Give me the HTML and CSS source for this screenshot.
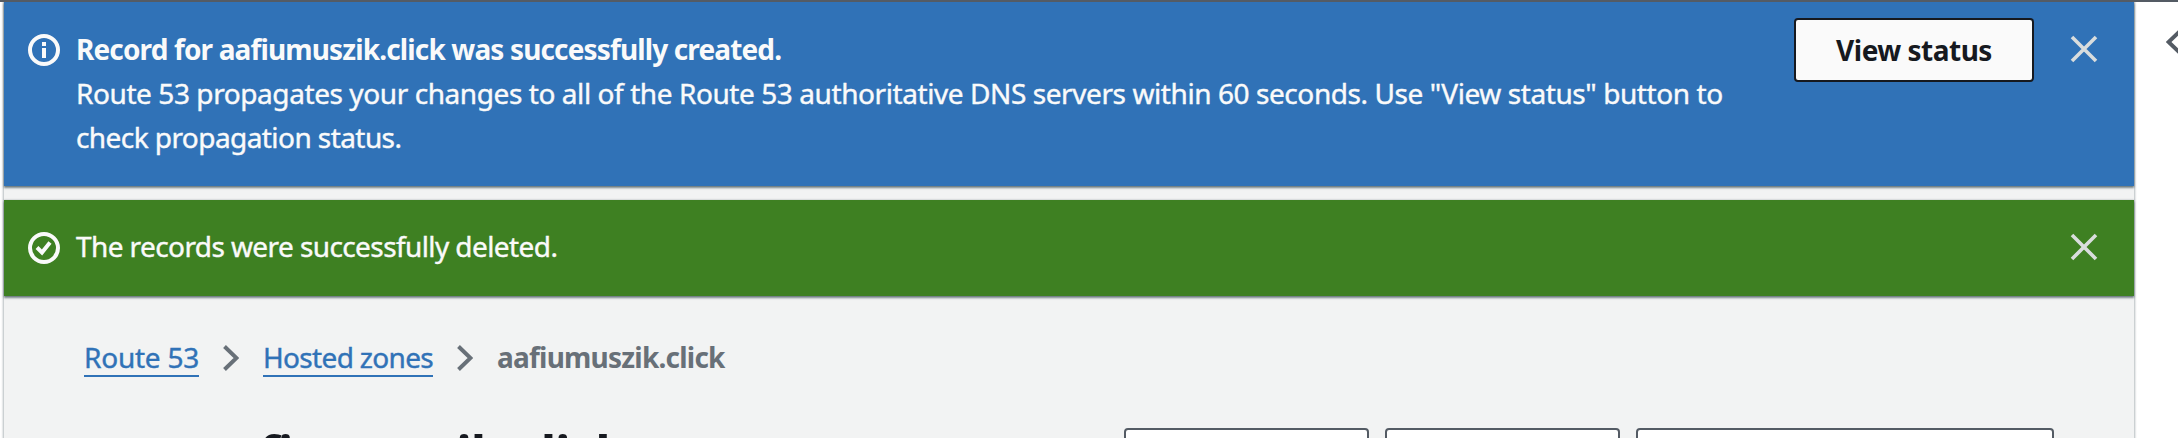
FILE: index.html
```html
<!DOCTYPE html>
<html lang="en">
<head>
<meta charset="utf-8">
<title>Route 53</title>
<link rel="stylesheet" href="styles.css">
</head>
<body>
<div class="app">
  <main class="content">
    <section class="flash flash-info">
      <svg class="flash-icon" viewBox="0 0 32 32"><circle cx="16" cy="16" r="14"/><path d="M16 14v10M16 8v4"/></svg>
      <div class="flash-text">
        <div class="flash-title">Record for aafiumuszik.click was successfully created.</div>
        <div class="flash-body">Route 53 propagates your changes to all of the Route 53 authoritative DNS servers within 60 seconds. Use "View status" button to<br><span class="flash-tail">check propagation status.</span></div>
      </div>
      <button class="status-button">View status</button>
      <svg class="close" viewBox="0 0 28 28"><path d="M2 2l24 24M26 2L2 26"/></svg>
    </section>
    <section class="flash flash-success">
      <svg class="flash-icon" viewBox="0 0 32 32"><circle cx="16" cy="16" r="14"/><path d="M9 15.500l5 5L22 10.500"/></svg>
      <div class="flash-text flash-deleted">The records were successfully deleted.</div>
      <svg class="close" viewBox="0 0 28 28"><path d="M2 2l24 24M26 2L2 26"/></svg>
    </section>
    <nav class="crumbs">
      <a class="crumb crumb-root">Route 53</a>
      <svg class="chevron" viewBox="0 0 16 26"><path d="M1.500 1.500L13.500 13l-12 11.500"/></svg>
      <a class="crumb crumb-zones">Hosted zones</a>
      <svg class="chevron" viewBox="0 0 16 26"><path d="M1.500 1.500L13.500 13l-12 11.500"/></svg>
      <span class="crumb-current">aafiumuszik.click</span>
    </nav>
    <header class="page-head">
      <h1 class="page-title">aafiumuszik.click</h1>
      <div class="actions">
        <div class="action action-a"></div>
        <div class="action action-b"></div>
        <div class="action action-c"></div>
      </div>
    </header>
  </main>
  <aside class="rail">
    <svg class="rail-chevron" viewBox="0 0 16 26"><path d="M14.500 1.500L2.500 13l12 11.500"/></svg>
  </aside>
</div>
</body>
</html>
```
FILE: styles.css
```css
* { box-sizing: border-box; }

body {
  margin: 0;
  height: 438px;
  overflow: hidden;
  background: #fff;
  font: 28px/44px "Noto Sans", "Open Sans", sans-serif;
}

.app {
  display: flex;
  height: 438px;
  padding-left: 4px;
  border-top: 2px solid #545b64;
  overflow: hidden;
}

.content {
  flex: none;
  width: 2130px;
  height: 500px;
  background: #f2f3f3;
  box-shadow: 0 0 2px 1px rgba(0, 28, 36, 0.3);
}

.flash {
  display: flex;
  align-items: flex-start;
  padding: 16px 36px 16px 24px;
  color: #fafafa;
  box-shadow: 0 2px 2px rgba(0, 28, 36, 0.5), 0 0 2px rgba(0, 28, 36, 0.3);
}

.flash-info { height: 184px; background: #3072b7; }
.flash-success { height: 96px; margin-top: 14px; background: #3e8022; }

.flash-icon {
  flex: none;
  width: 32px;
  height: 32px;
  margin-top: 16px;
  fill: none;
  stroke: #fafafa;
  stroke-width: 4;
}

.flash-text { flex: 1; margin: 9px 0 0 16px; white-space: nowrap; }
.flash-title { font-weight: 700; letter-spacing: -0.86px; }
.flash-body { letter-spacing: -0.42px; }
.flash-tail { letter-spacing: -0.57px; }
.flash-deleted { letter-spacing: -0.59px; }
.flash-body, .flash-deleted, .crumb { -webkit-text-stroke: 0.4px currentColor; }
.flash-success .flash-text { margin-top: 8px; }

.status-button {
  width: 240px;
  height: 64px;
  margin-right: 36px;
  padding: 0;
  border: 2px solid #16191f;
  border-radius: 4px;
  background: #fafafa;
  color: #16191f;
  font: 700 28px/40px "Noto Sans", "Open Sans", sans-serif;
  letter-spacing: -0.5px;
}

.close {
  flex: none;
  width: 28px;
  height: 28px;
  margin-top: 17px;
  fill: none;
  stroke: #d9dddd;
  stroke-width: 3.6;
}

.crumbs {
  display: flex;
  align-items: flex-start;
  height: 40px;
  margin: 42px 0 0 80px;
  line-height: 38px;
}

.crumb {
  height: 39px;
  border-bottom: 2px solid #3072b7;
  color: #3072b7;
  white-space: nowrap;
}

.crumb-root { width: 115px; letter-spacing: -0.24px; }
.crumb-zones { width: 170px; letter-spacing: -0.67px; }
.crumb-current { color: #687078; font-weight: 700; letter-spacing: -0.78px; }

.chevron {
  flex: none;
  width: 16px;
  height: 26px;
  margin: 7px 24px 0 24px;
  fill: none;
  stroke: #687078;
  stroke-width: 4;
}

.page-head {
  display: flex;
  align-items: flex-start;
  justify-content: space-between;
  margin-top: 50px;
  padding: 0 80px 0 195px;
}

.page-title {
  margin: 0;
  color: #16191f;
  font-size: 52px;
  font-weight: 700;
  line-height: 52px;
  letter-spacing: -1.2px;
}

.actions { display: flex; gap: 16px; }

.action {
  height: 64px;
  border: 2px solid #545b64;
  border-radius: 4px;
  background: #fff;
}

.action-a { width: 245px; }
.action-b { width: 235px; }
.action-c { width: 418px; }

.rail { flex: none; width: 40px; padding: 27px 0 0 32px; }

.rail-chevron {
  display: block;
  width: 16px;
  height: 26px;
  fill: none;
  stroke: #545b64;
  stroke-width: 4;
}
```
